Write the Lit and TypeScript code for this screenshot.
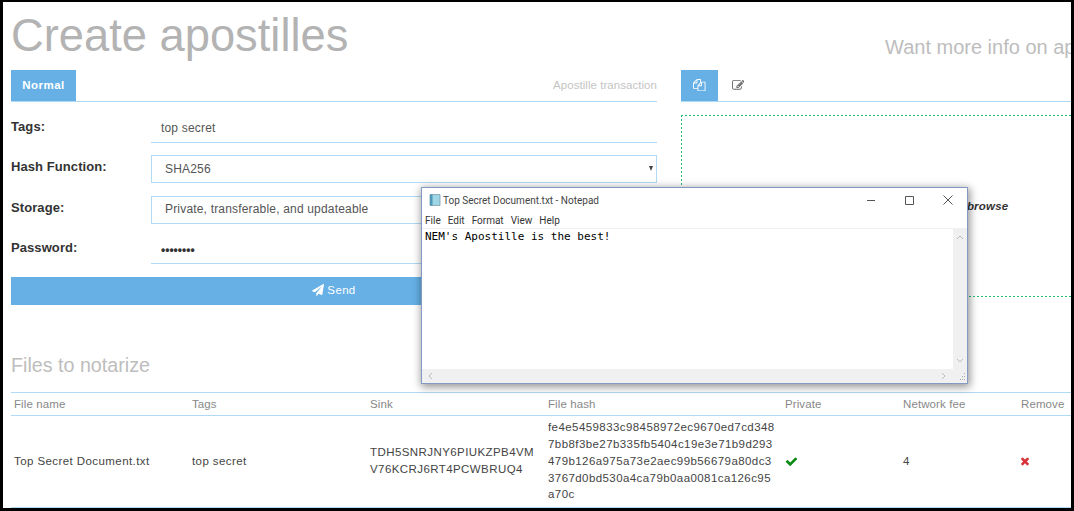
import { LitElement, html, css, svg } from "lit";
import { customElement } from "lit/decorators.js";

const fa = (d: string, cls: string) =>
  html`<svg class="fa ${cls}" viewBox="0 0 1792 1792" aria-hidden="true">${svg`<path d=${d} fill="currentColor"></path>`}</svg>`;

const PLANE = "M1764 11q33 24 27 64l-256 1536q-5 29-32 45-14 8-31 8-11 0-24-5l-453-185-242 295q-18 23-49 23-13 0-22-4-19-7-30.5-23.5t-11.5-36.5v-349l864-1059-1069 925-395-162q-37-14-40-55-2-40 32-59l1664-960q15-9 32-9 20 0 36 11z";
const CHECK = "M1671 566q0 40-28 68l-724 724-136 136q-28 28-68 28t-68-28l-136-136-362-362q-28-28-28-68t28-68l136-136q28-28 68-28t68 28l294 295 656-657q28-28 68-28t68 28l136 136q28 28 28 68z";
const TIMES = "M1490 1322q0 40-28 68l-136 136q-28 28-68 28t-68-28l-294-294-294 294q-28 28-68 28t-68-28l-136-136q-28-28-28-68t28-68l294-294-294-294q-28-28-28-68t28-68l136-136q28-28 68-28t68 28l294 294 294-294q28-28 68-28t68 28l136 136q28 28 28 68t-28 68l-294 294 294 294q28 28 28 68z";
const FILES = "M1696 384q40 0 68 28t28 68v1216q0 40-28 68t-68 28h-960q-40 0-68-28t-28-68v-288h-544q-40 0-68-28t-28-68v-672q0-40 20-88t48-76l408-408q28-28 76-48t88-20h416q40 0 68 28t28 68v328q68-40 128-40h416zm-544 213l-299 299h299v-299zm-640-384l-299 299h299v-299zm196 647l316-316v-416h-384v416q0 40-28 68t-68 28h-416v640h512v-256q0-40 20-92t48-80zm956 804v-1152h-384v416q0 40-28 68t-68 28h-416v640h896z";
const EDIT = "M888 1184l116-116-152-152-116 116v56h96v96h56zm440-720q-16-16-33 1l-350 350q-17 17-1 33t33-1l350-350q17-17 1-33zm80 594v190q0 119-84.5 203.5t-203.5 84.5h-832q-119 0-203.5-84.5t-84.5-203.5v-832q0-119 84.5-203.5t203.5-84.5h832q63 0 117 25 15 7 18 23 3 17-9 29l-49 49q-14 14-32 8-23-6-45-6h-832q-66 0-113 47t-47 113v832q0 66 47 113t113 47h832q66 0 113-47t47-113v-126q0-13 9-22l64-64q15-15 35-7t20 29zm-96-738l288 288-672 672h-288v-288zm444 132l-92 92-288-288 92-92q28-28 68-28t68 28l152 152q28 28 28 68t-28 68z";

const HASH = [
  "fe4e5459833c98458972ec9670ed7cd348",
  "7bb8f3be27b335fb5404c19e3e71b9d293",
  "479b126a975a73e2aec99b56679a80dc3",
  "3767d0bd530a4ca79b0aa0081ca126c95",
  "a70c",
];

@customElement("app-root")
export class AppRoot extends LitElement {
  static styles = css`
    :host {
      display: block;
      position: relative;
      width: 1074px;
      height: 511px;
      box-sizing: border-box;
      border-style: solid;
      border-color: #000;
      border-width: 2px 3px 3px 3px;
      background: #fff;
      overflow: hidden;
      font-family: "Liberation Sans", Arial, sans-serif;
      color: #333;
    }
    .page {
      width: 1300px;
      padding-left: 8px;
      box-sizing: border-box;
    }
    .top {
      display: grid;
      grid-template-columns: 646px 646px;
      column-gap: 24px;
    }
    h1 {
      margin: 0;
      height: 68px;
      font-size: 45.3px;
      line-height: 68px;
      font-weight: 400;
      color: #b3b3b3;
    }
    .info {
      height: 68px;
      padding-left: 204px;
      font-size: 20px;
      line-height: 90px;
      color: #bdbdbd;
      white-space: nowrap;
      overflow: hidden;
    }
    .tabs {
      display: flex;
      align-items: stretch;
      height: 31px;
      border-bottom: 1.5px solid #b0d9f5;
    }
    .tab {
      display: flex;
      align-items: center;
      justify-content: center;
      padding-bottom: 1px;
      box-sizing: border-box;
      background: #66b0e6;
      color: #fff;
      font-size: 11.5px;
      font-weight: 700;
      letter-spacing: 0.45px;
      width: 65px;
    }
    .tab.icon { width: 37px; }
    .tab.plain { background: none; color: #666; width: 40px; }
    .tabs .note {
      margin-left: auto;
      align-self: center;
      padding-bottom: 2px;
      font-size: 11.5px;
      letter-spacing: 0.05px;
      color: #c4c4c4;
    }
    .fa.files, .fa.edit { width: 12.5px; height: 12.5px; }
    form {
      display: flex;
      flex-direction: column;
      gap: 12.3px;
      padding-top: 13px;
    }
    .row {
      display: grid;
      grid-template-columns: 140px 1fr;
      height: 28px;
    }
    .row label {
      font-size: 13px;
      font-weight: 700;
      letter-spacing: 0.08px;
      color: #333;
      line-height: 24px;
    }
    .field {
      box-sizing: border-box;
      height: 28px;
      font-size: 12px;
      line-height: 26px;
      color: #555;
      position: relative;
      letter-spacing: 0.18px;
    }
    .field.input { border-bottom: 1.3px solid #b0d9f5; padding-left: 10px; }
    .field.select { border: 1.3px solid #b0d9f5; padding-left: 13px; line-height: 25px; }
    .field.select.first { line-height: 27px; }
    .caret {
      position: absolute;
      right: 3px;
      top: 10px;
      width: 0;
      height: 0;
      border-left: 2.5px solid transparent;
      border-right: 2.5px solid transparent;
      border-top: 5px solid #444;
    }
    .field.dots { letter-spacing: 0; font-size: 12px; color: #333; font-weight: 700; line-height: 28px; }
    button {
      margin-top: 0.5px;
      display: flex;
      align-items: center;
      justify-content: center;
      gap: 3px;
      height: 28px;
      border: 0;
      padding: 0 0 2px;
      width: 100%;
      background: #66b0e6;
      color: #fff;
      font: 11.5px "Liberation Sans", Arial, sans-serif;
      letter-spacing: 0.35px;
    }
    .fa.plane { width: 12px; height: 12px; }
    .zone {
      box-sizing: border-box;
      margin-top: 13px;
      height: 182px;
      background:
        linear-gradient(90deg, #1fbf78 50%, transparent 50%) left top / 4px 1px repeat-x,
        linear-gradient(90deg, #1fbf78 50%, transparent 50%) left bottom / 4px 1px repeat-x,
        linear-gradient(180deg, #1fbf78 50%, transparent 50%) left top / 1px 4px repeat-y;
      padding-left: 101px;
      display: flex;
      align-items: center;
      font-size: 11.5px;
      font-weight: 700;
      font-style: italic;
      letter-spacing: 0.2px;
      color: #333;
      white-space: nowrap;
    }
    h2 {
      margin: 48px 0 0;
      height: 39px;
      font-size: 19.7px;
      line-height: 24px;
      font-weight: 400;
      color: #bdbdbd;
    }
    .table {
      width: 1125px;
      border-top: 1.5px solid #b0d9f5;
      border-bottom: 1.5px solid #b0d9f5;
      display: grid;
      grid-template-columns: 178px 178px 178px 237px 118px 118px 118px;
      font-size: 11.5px;
      letter-spacing: 0.42px;
    }
    .head {
      height: 22px;
      line-height: 22px;
      padding-left: 3px;
      color: #888;
      letter-spacing: 0.1px;
      border-bottom: 1.5px solid #b0d9f5;
    }
    .cell {
      height: 91px;
      padding-left: 3px;
      display: flex;
      flex-direction: column;
      justify-content: center;
      align-items: flex-start;
      line-height: 16.7px;
      color: #444;
    }
    .fa.check { width: 13px; height: 13px; color: #0a8a12; }
    .fa.times { width: 12px; height: 12px; margin-left: -2px; color: #d9303a; }
    .notepad {
      position: absolute;
      left: 418px;
      top: 185px;
      width: 547px;
      height: 197px;
      box-sizing: border-box;
      border: 1px solid #8499c4;
      background: #fff;
      box-shadow: 1px 2px 8px 1px rgba(0, 0, 0, 0.42);
      display: grid;
      grid-template-rows: 24px 17px 1fr 14px;
      grid-template-columns: 1fr 14px;
      font-family: Roboto, "Liberation Sans", sans-serif;
    }
    .titlebar {
      grid-column: 1 / 3;
      display: flex;
      align-items: center;
      padding: 0 11px 0 6px;
      gap: 1px;
      font-size: 10px;
      color: #444;
    }
    .titlebar .ctl { margin-left: auto; display: block; }
    .menu {
      grid-column: 1 / 3;
      display: flex;
      gap: 7px;
      padding: 2px 0 0 3px;
      font-size: 10px;
      line-height: 14px;
      color: #333;
      border-bottom: 1px solid #f0f0f0;
    }
    .text {
      padding: 1px 0 0 3px;
      font: 11px/13px "DejaVu Sans Mono", "Liberation Mono", monospace;
      color: #000;
    }
    .sb {
      background: #f0f0f0;
      position: relative;
    }
    .sb svg { position: absolute; display: block; }
    .sb .up { top: 5px; left: 3px; }
    .sb .down { bottom: 5px; left: 3px; }
    .sb .left { top: 3px; left: 5px; }
    .sb .right { top: 3px; right: 6px; }
    .grip { background: #f0f0f0; }
    .grip svg { display: block; }
  `;

  render() {
    return html`
      <div class="page">
        <div class="top">
          <h1>Create apostilles</h1>
          <div class="info">Want more info on apostille?</div>
          <div>
            <div class="tabs">
              <div class="tab">Normal</div>
              <div class="note">Apostille transaction</div>
            </div>
            <form>
              <div class="row"><label>Tags:</label><div class="field input">top secret</div></div>
              <div class="row"><label>Hash Function:</label><div class="field select first">SHA256<span class="caret"></span></div></div>
              <div class="row"><label>Storage:</label><div class="field select">Private, transferable, and updateable</div></div>
              <div class="row"><label>Password:</label><div class="field input dots">••••••••</div></div>
              <button type="button">${fa(PLANE, "plane")}Send</button>
            </form>
          </div>
          <div>
            <div class="tabs">
              <div class="tab icon">${fa(FILES, "files")}</div>
              <div class="tab icon plain">${fa(EDIT, "edit")}</div>
            </div>
            <div class="zone">Drag and drop your files here or browse</div>
          </div>
        </div>
        <h2>Files to notarize</h2>
        <div class="table">
          <div class="head">File name</div>
          <div class="head">Tags</div>
          <div class="head">Sink</div>
          <div class="head">File hash</div>
          <div class="head">Private</div>
          <div class="head">Network fee</div>
          <div class="head">Remove</div>
          <div class="cell">Top Secret Document.txt</div>
          <div class="cell">top secret</div>
          <div class="cell"><span>TDH5SNRJNY6PIUKZPB4VM</span><span>V76KCRJ6RT4PCWBRUQ4</span></div>
          <div class="cell">${HASH.map((l) => html`<span>${l}</span>`)}</div>
          <div class="cell">${fa(CHECK, "check")}</div>
          <div class="cell">4</div>
          <div class="cell">${fa(TIMES, "times")}</div>
        </div>
      </div>
      <div class="notepad">
        <div class="titlebar">
          <svg width="14" height="14" viewBox="0 0 14 14">
            <path d="M2 1.5h10v11H2z" fill="#9fd6e6" stroke="#7c9aaa" stroke-width=".8"></path>
            <path d="M2 1.5h2.5v11H2z" fill="#4f97b8"></path>
          </svg>
          <span>Top Secret Document.txt - Notepad</span>
          <svg class="ctl" width="90" height="14" viewBox="0 0 90 14">
            <path d="M1 7.5h8" stroke="#555" fill="none"></path>
            <path d="M39.5 3.5h8v8h-8z" stroke="#555" fill="none"></path>
            <path d="M77.5 2.5l9 9m0-9l-9 9" stroke="#555" fill="none"></path>
          </svg>
        </div>
        <div class="menu"><span>File</span><span>Edit</span><span>Format</span><span>View</span><span>Help</span></div>
        <div class="text">NEM's Apostille is the best!</div>
        <div class="sb">
          <svg class="up" width="8" height="6" viewBox="0 0 8 6"><path d="M1 5l3-3 3 3" stroke="#bbb" fill="none"></path></svg>
          <svg class="down" width="8" height="6" viewBox="0 0 8 6"><path d="M1 1l3 3 3-3" stroke="#bbb" fill="none"></path></svg>
        </div>
        <div class="sb">
          <svg class="left" width="6" height="8" viewBox="0 0 6 8"><path d="M5 1L2 4l3 3" stroke="#bbb" fill="none"></path></svg>
          <svg class="right" width="6" height="8" viewBox="0 0 6 8"><path d="M1 1l3 3-3 3" stroke="#bbb" fill="none"></path></svg>
        </div>
        <div class="grip">
          <svg width="14" height="14" viewBox="0 0 14 14"><path d="M11 4h1v1h-1zM9 7h1v1H9zM11 7h1v1h-1zM7 10h1v1H7zM9 10h1v1H9zM11 10h1v1h-1z" fill="#aaa"></path></svg>
        </div>
      </div>
    `;
  }
}
